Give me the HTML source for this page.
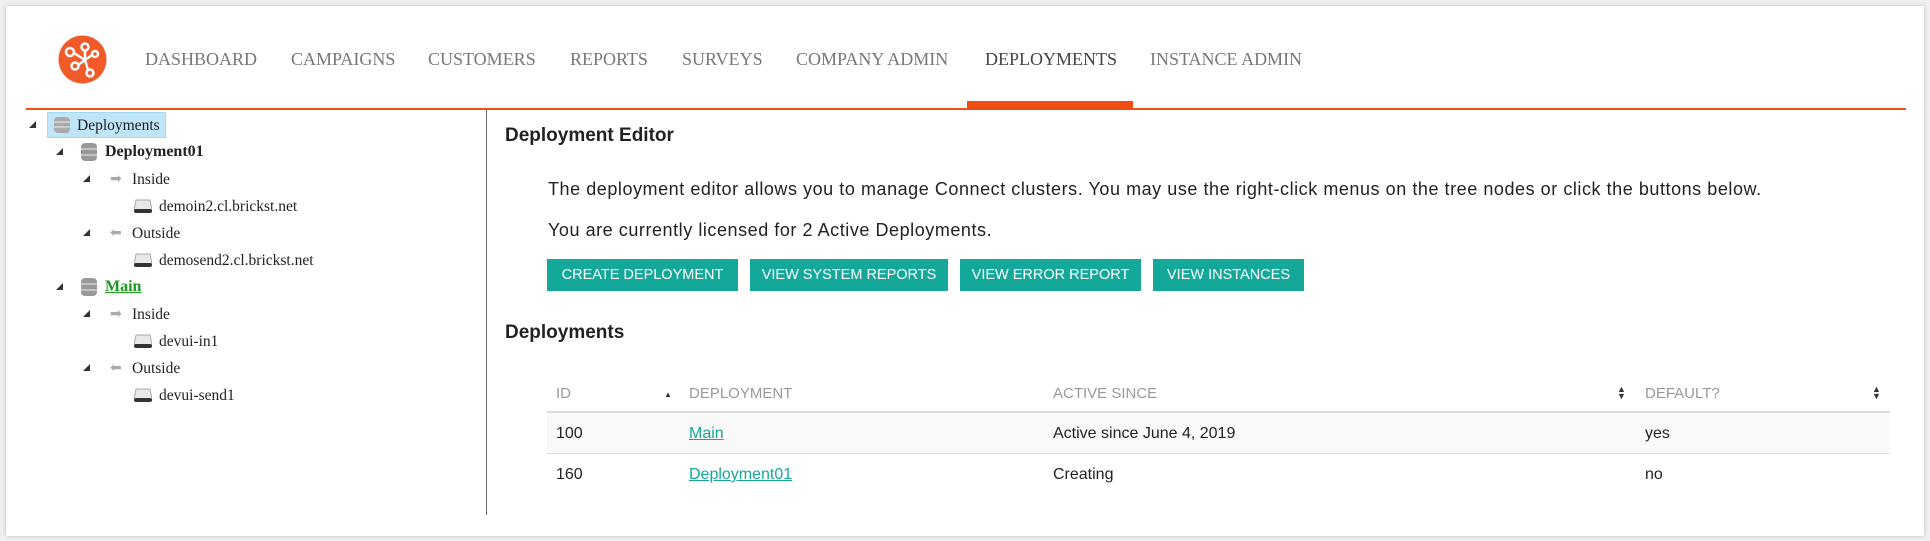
<!DOCTYPE html>
<html><head><meta charset="utf-8"><style>
*{margin:0;padding:0;box-sizing:border-box}
body{width:1930px;height:541px;background:#f0f0f0;position:relative;overflow:hidden;font-family:"Liberation Sans",sans-serif}
#page{position:absolute;left:6px;top:6px;width:1918px;height:530px;background:#fff;box-shadow:0 0 4px #bbb}
.a{position:absolute;white-space:nowrap}
.nav{font-family:"Liberation Serif",serif;font-size:18px;color:#777;top:49px}
.tr{font-family:"Liberation Serif",serif;font-size:15.5px;color:#222}
.tri{position:absolute;width:0;height:0;border-left:7px solid transparent;border-bottom:7px solid #333}
.btn{position:absolute;top:259px;height:32px;background:#14a89a;color:#fff;font-size:14.5px;line-height:32px;text-align:center}
.th{font-size:15px;color:#999;top:385px}
.td{font-size:16px;color:#222}
.lk{color:#14a89a;text-decoration:underline}
</style></head><body>
<div id="page"></div>
<svg class="a" style="left:57px;top:34px" width="51" height="51" viewBox="0 0 51 51">
<circle cx="25.5" cy="25.5" r="24" fill="#f15a29"/>
<g stroke="#fff" stroke-width="2.5" fill="none">
<circle cx="13" cy="18" r="4"/><circle cx="28" cy="13" r="3.5"/><circle cx="18" cy="32" r="3.5"/><circle cx="38" cy="20" r="3"/><circle cx="33" cy="39" r="3.5"/>
<path d="M17 19 L28 26 M28 17 L28 26 M21 31 L28 26 M35 21 L28 26 M31 36 L28 26"/></g></svg>
<div class="a nav" style="left:145px">DASHBOARD</div>
<div class="a nav" style="left:291px">CAMPAIGNS</div>
<div class="a nav" style="left:428px">CUSTOMERS</div>
<div class="a nav" style="left:570px">REPORTS</div>
<div class="a nav" style="left:682px">SURVEYS</div>
<div class="a nav" style="left:796px">COMPANY ADMIN</div>
<div class="a nav" style="left:985px;color:#444">DEPLOYMENTS</div>
<div class="a nav" style="left:1150px">INSTANCE ADMIN</div>
<div class="a" style="left:26px;top:108px;width:1880px;height:2px;background:#f04e12"></div>
<div class="a" style="left:967px;top:101px;width:166px;height:8px;background:#f04e12"></div>
<div class="a" style="left:486px;top:110px;width:1px;height:405px;background:#666"></div>

<div class="a" style="left:47px;top:112px;width:119px;height:26px;background:#bfe6f8;border:1px solid #a6d8f0"></div>
<div class="tri" style="left:29px;top:121px"></div>
<div class="tri" style="left:56px;top:148px"></div>
<div class="tri" style="left:83px;top:175px"></div>
<div class="tri" style="left:83px;top:229px"></div>
<div class="tri" style="left:56px;top:283px"></div>
<div class="tri" style="left:83px;top:310px"></div>
<div class="tri" style="left:83px;top:364px"></div>
<svg class="a" style="left:53px;top:116px" width="18" height="18"><rect x="1" y="1" width="16" height="16" rx="4" fill="#aaa"/><path d="M1 6h16M1 11h16" stroke="#eee"/></svg>
<svg class="a" style="left:81px;top:143px" width="16" height="18"><rect x="0" y="0" width="16" height="18" rx="4" fill="#999"/><path d="M0 6h16M0 12h16" stroke="#eee"/></svg>
<svg class="a" style="left:81px;top:278px" width="16" height="18"><rect x="0" y="0" width="16" height="18" rx="4" fill="#999"/><path d="M0 6h16M0 12h16" stroke="#eee"/></svg>
<div class="a tr" style="left:77px;top:117px">Deployments</div>
<div class="a tr" style="left:105px;top:143px;font-weight:bold;font-size:16px">Deployment01</div>
<div class="a tr" style="left:105px;top:278px;font-weight:bold;font-size:16px;color:#1a9a1a;text-decoration:underline">Main</div>
<div class="a" style="left:110px;top:170px;color:#aaa;font-size:14px">➡</div>
<div class="a" style="left:110px;top:224px;color:#aaa;font-size:14px">⬅</div>
<div class="a" style="left:110px;top:305px;color:#aaa;font-size:14px">➡</div>
<div class="a" style="left:110px;top:359px;color:#aaa;font-size:14px">⬅</div>
<div class="a tr" style="left:132px;top:171px">Inside</div>
<div class="a tr" style="left:132px;top:225px">Outside</div>
<div class="a tr" style="left:132px;top:306px">Inside</div>
<div class="a tr" style="left:132px;top:360px">Outside</div>
<svg class="a" style="left:134px;top:198px" width="18" height="16"><path d="M2 2h14l2 10H0z" fill="#e8e8e8" stroke="#aaa"/><rect x="0" y="11" width="18" height="4" rx="2" fill="#333"/></svg>
<svg class="a" style="left:134px;top:252px" width="18" height="16"><path d="M2 2h14l2 10H0z" fill="#e8e8e8" stroke="#aaa"/><rect x="0" y="11" width="18" height="4" rx="2" fill="#333"/></svg>
<svg class="a" style="left:134px;top:333px" width="18" height="16"><path d="M2 2h14l2 10H0z" fill="#e8e8e8" stroke="#aaa"/><rect x="0" y="11" width="18" height="4" rx="2" fill="#333"/></svg>
<svg class="a" style="left:134px;top:387px" width="18" height="16"><path d="M2 2h14l2 10H0z" fill="#e8e8e8" stroke="#aaa"/><rect x="0" y="11" width="18" height="4" rx="2" fill="#333"/></svg>
<div class="a tr" style="left:159px;top:198px">demoin2.cl.brickst.net</div>
<div class="a tr" style="left:159px;top:252px">demosend2.cl.brickst.net</div>
<div class="a tr" style="left:159px;top:333px">devui-in1</div>
<div class="a tr" style="left:159px;top:387px">devui-send1</div>

<div class="a" style="left:505px;top:125px;font-size:19px;font-weight:bold;color:#222">Deployment Editor</div>
<div class="a" style="left:548px;top:179px;font-size:18px;color:#222;letter-spacing:0.55px">The deployment editor allows you to manage Connect clusters. You may use the right-click menus on the tree nodes or click the buttons below.</div>
<div class="a" style="left:548px;top:220px;font-size:18px;color:#222;letter-spacing:0.55px">You are currently licensed for 2 Active Deployments.</div>
<div class="btn" style="left:547px;width:191px">CREATE DEPLOYMENT</div>
<div class="btn" style="left:750px;width:198px">VIEW SYSTEM REPORTS</div>
<div class="btn" style="left:960px;width:181px">VIEW ERROR REPORT</div>
<div class="btn" style="left:1153px;width:151px">VIEW INSTANCES</div>
<div class="a" style="left:505px;top:322px;font-size:19px;font-weight:bold;color:#222">Deployments</div>

<div class="a th" style="left:556px">ID</div>
<div class="a" style="left:664px;top:390px;font-size:8px;color:#333">▲</div>
<div class="a th" style="left:689px">DEPLOYMENT</div>
<div class="a th" style="left:1053px">ACTIVE SINCE</div>
<div class="a" style="left:1617px;top:386px;font-size:9px;line-height:7px;color:#333">▲<br>▼</div>
<div class="a th" style="left:1645px">DEFAULT?</div>
<div class="a" style="left:1872px;top:386px;font-size:9px;line-height:7px;color:#333">▲<br>▼</div>
<div class="a" style="left:547px;top:411px;width:1343px;height:2px;background:#ddd"></div>
<div class="a" style="left:547px;top:413px;width:1343px;height:41px;background:#f9f9f9;border-bottom:1px solid #ddd"></div>
<div class="a td" style="left:556px;top:425px">100</div>
<div class="a td lk" style="left:689px;top:425px">Main</div>
<div class="a td" style="left:1053px;top:425px">Active since June 4, 2019</div>
<div class="a td" style="left:1645px;top:425px">yes</div>
<div class="a td" style="left:556px;top:466px">160</div>
<div class="a td lk" style="left:689px;top:466px">Deployment01</div>
<div class="a td" style="left:1053px;top:466px">Creating</div>
<div class="a td" style="left:1645px;top:466px">no</div>
</body></html>
